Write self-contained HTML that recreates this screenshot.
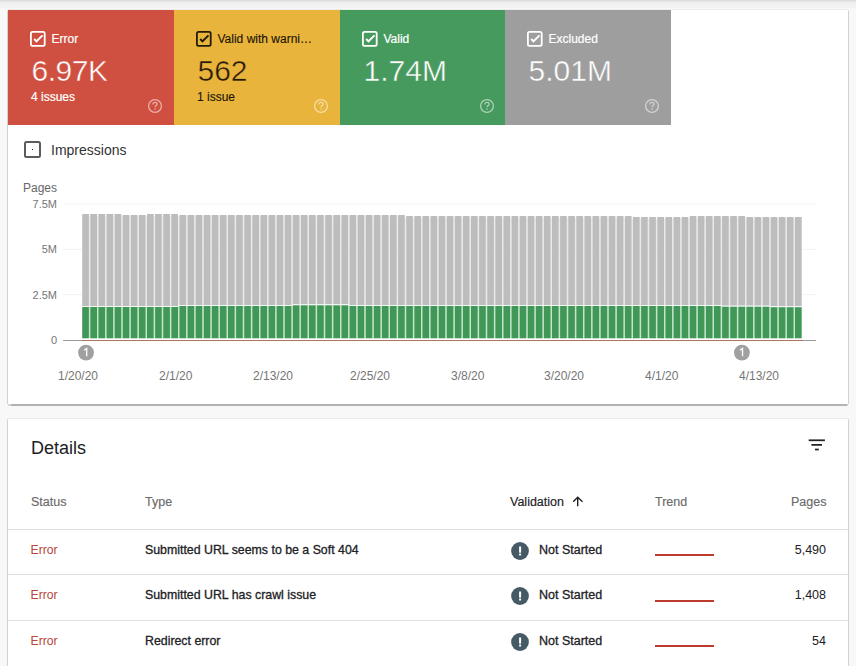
<!DOCTYPE html>
<html><head><meta charset="utf-8">
<style>
*{margin:0;padding:0;box-sizing:border-box}
html,body{width:856px;height:666px;overflow:hidden}
body{background:#f8f8f8;font-family:"Liberation Sans",sans-serif;position:relative}
.topstrip{position:absolute;left:0;top:0;width:856px;height:8px;background:linear-gradient(#d9d9d9 0px,#e6e6e6 1.5px,#f0f0f1 3px,#f2f2f3 8px)}
.card{position:absolute;left:8px;width:840px;background:#fff;box-shadow:1px 0 0 rgba(0,0,0,.13),-1px 0 0 rgba(0,0,0,.13),0 -1px 0 rgba(0,0,0,.05),0 1.5px 1px rgba(0,0,0,.28)}
#c1{top:10px;height:394px}
#c2{top:419px;height:300px}
.tile{position:absolute;top:10px;height:115px}
.t{position:absolute;white-space:nowrap;line-height:1}
.cb{position:absolute;width:16px;height:16px;border:2px solid;border-radius:2px}
.q{position:absolute;width:14px;height:14px}
.ylab{position:absolute;width:40px;text-align:right;font-size:11px;color:#757575;line-height:1}
.xlab{position:absolute;font-size:12px;color:#757575;line-height:1;white-space:nowrap}
.hdr{position:absolute;font-size:12.5px;color:#6a6a6a;line-height:1;white-space:nowrap;-webkit-text-stroke:0.15px currentColor}
.med{-webkit-text-stroke:0.3px currentColor}
.med2{-webkit-text-stroke:0.2px currentColor}
.cell{position:absolute;font-size:12.5px;line-height:1;white-space:nowrap}
.sep{position:absolute;left:8px;width:840px;height:1px;background:#e0e0e0}
</style></head><body>
<div class="topstrip"></div>
<div class="card" id="c1"></div>
<div class="card" id="c2"></div>

<!-- tiles -->
<div class="tile" style="left:8px;width:166px;background:#cf5040"></div>
<div class="tile" style="left:174px;width:166px;background:#e9b43c"></div>
<div class="tile" style="left:340px;width:165px;background:#479a5e"></div>
<div class="tile" style="left:505px;width:166px;background:#9e9e9e"></div>

<!-- tile contents -->
<svg width="18" height="18" style="position:absolute;left:30.1px;top:31.1px"><rect x="0.9" y="0.9" width="13.8" height="13.9" rx="1.6" fill="none" stroke="#fff" stroke-width="1.8"/><polyline points="4.2,8.0 6.5,10.3 12.5,4.4" fill="none" stroke="#fff" stroke-width="1.9"/></svg>
<div class="t med2" style="left:51.5px;top:33px;font-size:12px;color:#fff">Error</div>
<div class="t" style="left:31.5px;top:55.5px;font-size:30px;color:#fff;-webkit-text-stroke:0.45px #cf5040;letter-spacing:-0.45px">6.97K</div>
<div class="t med2" style="left:31px;top:91px;font-size:12px;color:#fff">4 issues</div>
<svg width="16" height="16" style="position:absolute;left:147px;top:98px"><circle cx="8" cy="8" r="6.4" fill="none" stroke="rgba(255,255,255,0.55)" stroke-width="1.3"/><path d="M5.9 6.4 C5.9 5.1 6.9 4.4 8 4.4 C9.2 4.4 10.1 5.2 10.1 6.2 C10.1 7.5 8.1 7.6 8.1 9.3" fill="none" stroke="rgba(255,255,255,0.55)" stroke-width="1.2"/><rect x="7.4" y="10.4" width="1.3" height="1.3" fill="rgba(255,255,255,0.55)"/></svg>
<svg width="18" height="18" style="position:absolute;left:196.1px;top:31.1px"><rect x="0.9" y="0.9" width="13.8" height="13.9" rx="1.6" fill="none" stroke="rgba(0,0,0,.85)" stroke-width="1.8"/><polyline points="4.2,8.0 6.5,10.3 12.5,4.4" fill="none" stroke="rgba(0,0,0,.85)" stroke-width="1.9"/></svg>
<div class="t med2" style="left:217.5px;top:33px;font-size:12px;color:rgba(0,0,0,.85)">Valid with warni…</div>
<div class="t" style="left:197.5px;top:55.5px;font-size:30px;color:rgba(0,0,0,.85);-webkit-text-stroke:0.45px #e9b43c">562</div>
<div class="t med2" style="left:197px;top:91px;font-size:12px;color:rgba(0,0,0,.85)">1 issue</div>
<svg width="16" height="16" style="position:absolute;left:313px;top:98px"><circle cx="8" cy="8" r="6.4" fill="none" stroke="rgba(255,255,255,0.55)" stroke-width="1.3"/><path d="M5.9 6.4 C5.9 5.1 6.9 4.4 8 4.4 C9.2 4.4 10.1 5.2 10.1 6.2 C10.1 7.5 8.1 7.6 8.1 9.3" fill="none" stroke="rgba(255,255,255,0.55)" stroke-width="1.2"/><rect x="7.4" y="10.4" width="1.3" height="1.3" fill="rgba(255,255,255,0.55)"/></svg>
<svg width="18" height="18" style="position:absolute;left:362.1px;top:31.1px"><rect x="0.9" y="0.9" width="13.8" height="13.9" rx="1.6" fill="none" stroke="#fff" stroke-width="1.8"/><polyline points="4.2,8.0 6.5,10.3 12.5,4.4" fill="none" stroke="#fff" stroke-width="1.9"/></svg>
<div class="t med2" style="left:383.5px;top:33px;font-size:12px;color:#fff">Valid</div>
<div class="t" style="left:363.5px;top:55.5px;font-size:30px;color:#fff;-webkit-text-stroke:0.45px #479a5e">1.74M</div>
<svg width="16" height="16" style="position:absolute;left:479px;top:98px"><circle cx="8" cy="8" r="6.4" fill="none" stroke="rgba(255,255,255,0.55)" stroke-width="1.3"/><path d="M5.9 6.4 C5.9 5.1 6.9 4.4 8 4.4 C9.2 4.4 10.1 5.2 10.1 6.2 C10.1 7.5 8.1 7.6 8.1 9.3" fill="none" stroke="rgba(255,255,255,0.55)" stroke-width="1.2"/><rect x="7.4" y="10.4" width="1.3" height="1.3" fill="rgba(255,255,255,0.55)"/></svg>
<svg width="18" height="18" style="position:absolute;left:527.1px;top:31.1px"><rect x="0.9" y="0.9" width="13.8" height="13.9" rx="1.6" fill="none" stroke="#fff" stroke-width="1.8"/><polyline points="4.2,8.0 6.5,10.3 12.5,4.4" fill="none" stroke="#fff" stroke-width="1.9"/></svg>
<div class="t med2" style="left:548.5px;top:33px;font-size:12px;color:#fff">Excluded</div>
<div class="t" style="left:528.5px;top:55.5px;font-size:30px;color:#fff;-webkit-text-stroke:0.45px #9e9e9e">5.01M</div>
<svg width="16" height="16" style="position:absolute;left:644px;top:98px"><circle cx="8" cy="8" r="6.4" fill="none" stroke="rgba(255,255,255,0.55)" stroke-width="1.3"/><path d="M5.9 6.4 C5.9 5.1 6.9 4.4 8 4.4 C9.2 4.4 10.1 5.2 10.1 6.2 C10.1 7.5 8.1 7.6 8.1 9.3" fill="none" stroke="rgba(255,255,255,0.55)" stroke-width="1.2"/><rect x="7.4" y="10.4" width="1.3" height="1.3" fill="rgba(255,255,255,0.55)"/></svg>

<!-- impressions -->
<div style="position:absolute;left:23.7px;top:140.9px;width:17.6px;height:17.6px;border:2px solid #5c5c5c;border-radius:2.5px"></div>
<div style="position:absolute;left:31.9px;top:149px;width:1.2px;height:1.2px;background:#222"></div>
<div class="t" style="left:51px;top:143px;font-size:14px;color:#333">Impressions</div>
<div class="t" style="left:23px;top:182px;font-size:12px;color:#666">Pages</div>

<svg width="856" height="666" style="position:absolute;left:0;top:0">
<g stroke="#f2f2f2" stroke-width="1">
<line x1="63" y1="204" x2="816" y2="204"/>
<line x1="63" y1="249.3" x2="816" y2="249.3"/>
<line x1="63" y1="294.6" x2="816" y2="294.6"/>
</g>
<line x1="63" y1="340.5" x2="816" y2="340.5" stroke="#9a9a9a" stroke-width="1"/>
<rect x="88.90" y="215.5" width="1.40" height="90.50" fill="#e9e9e9"/>
<rect x="88.90" y="307" width="1.40" height="31.30" fill="#c2e8c8"/>
<rect x="97.00" y="215.5" width="1.40" height="90.50" fill="#e9e9e9"/>
<rect x="97.00" y="307" width="1.40" height="31.30" fill="#c2e8c8"/>
<rect x="105.10" y="215.5" width="1.40" height="90.50" fill="#e9e9e9"/>
<rect x="105.10" y="307" width="1.40" height="31.30" fill="#c2e8c8"/>
<rect x="113.20" y="215.5" width="1.40" height="90.50" fill="#e9e9e9"/>
<rect x="113.20" y="307" width="1.40" height="31.30" fill="#c2e8c8"/>
<rect x="121.30" y="216.5" width="1.40" height="89.50" fill="#e9e9e9"/>
<rect x="121.30" y="307" width="1.40" height="31.30" fill="#c2e8c8"/>
<rect x="129.40" y="216.5" width="1.40" height="89.50" fill="#e9e9e9"/>
<rect x="129.40" y="307" width="1.40" height="31.30" fill="#c2e8c8"/>
<rect x="137.50" y="216.5" width="1.40" height="89.50" fill="#e9e9e9"/>
<rect x="137.50" y="307" width="1.40" height="31.30" fill="#c2e8c8"/>
<rect x="145.60" y="216.5" width="1.40" height="89.50" fill="#e9e9e9"/>
<rect x="145.60" y="307" width="1.40" height="31.30" fill="#c2e8c8"/>
<rect x="153.70" y="215.5" width="1.40" height="90.50" fill="#e9e9e9"/>
<rect x="153.70" y="307" width="1.40" height="31.30" fill="#c2e8c8"/>
<rect x="161.80" y="215.5" width="1.40" height="90.50" fill="#e9e9e9"/>
<rect x="161.80" y="307" width="1.40" height="31.30" fill="#c2e8c8"/>
<rect x="169.90" y="215.5" width="1.40" height="90.50" fill="#e9e9e9"/>
<rect x="169.90" y="307" width="1.40" height="31.30" fill="#c2e8c8"/>
<rect x="178.00" y="216.5" width="1.40" height="88.50" fill="#e9e9e9"/>
<rect x="178.00" y="306" width="1.40" height="32.30" fill="#c2e8c8"/>
<rect x="186.10" y="216.5" width="1.40" height="88.50" fill="#e9e9e9"/>
<rect x="186.10" y="306" width="1.40" height="32.30" fill="#c2e8c8"/>
<rect x="194.20" y="216.5" width="1.40" height="88.50" fill="#e9e9e9"/>
<rect x="194.20" y="306" width="1.40" height="32.30" fill="#c2e8c8"/>
<rect x="202.30" y="216.5" width="1.40" height="88.50" fill="#e9e9e9"/>
<rect x="202.30" y="306" width="1.40" height="32.30" fill="#c2e8c8"/>
<rect x="210.40" y="216.5" width="1.40" height="88.50" fill="#e9e9e9"/>
<rect x="210.40" y="306" width="1.40" height="32.30" fill="#c2e8c8"/>
<rect x="218.50" y="216.5" width="1.40" height="88.50" fill="#e9e9e9"/>
<rect x="218.50" y="306" width="1.40" height="32.30" fill="#c2e8c8"/>
<rect x="226.60" y="216.5" width="1.40" height="88.50" fill="#e9e9e9"/>
<rect x="226.60" y="306" width="1.40" height="32.30" fill="#c2e8c8"/>
<rect x="234.70" y="216.5" width="1.40" height="88.50" fill="#e9e9e9"/>
<rect x="234.70" y="306" width="1.40" height="32.30" fill="#c2e8c8"/>
<rect x="242.80" y="216.5" width="1.40" height="88.50" fill="#e9e9e9"/>
<rect x="242.80" y="306" width="1.40" height="32.30" fill="#c2e8c8"/>
<rect x="250.90" y="216.5" width="1.40" height="88.50" fill="#e9e9e9"/>
<rect x="250.90" y="306" width="1.40" height="32.30" fill="#c2e8c8"/>
<rect x="259.00" y="216.5" width="1.40" height="88.50" fill="#e9e9e9"/>
<rect x="259.00" y="306" width="1.40" height="32.30" fill="#c2e8c8"/>
<rect x="267.10" y="216.5" width="1.40" height="88.50" fill="#e9e9e9"/>
<rect x="267.10" y="306" width="1.40" height="32.30" fill="#c2e8c8"/>
<rect x="275.20" y="216.5" width="1.40" height="88.50" fill="#e9e9e9"/>
<rect x="275.20" y="306" width="1.40" height="32.30" fill="#c2e8c8"/>
<rect x="283.30" y="216.5" width="1.40" height="88.50" fill="#e9e9e9"/>
<rect x="283.30" y="306" width="1.40" height="32.30" fill="#c2e8c8"/>
<rect x="291.40" y="216.5" width="1.40" height="87.80" fill="#e9e9e9"/>
<rect x="291.40" y="305.3" width="1.40" height="33.00" fill="#c2e8c8"/>
<rect x="299.50" y="216.5" width="1.40" height="87.80" fill="#e9e9e9"/>
<rect x="299.50" y="305.3" width="1.40" height="33.00" fill="#c2e8c8"/>
<rect x="307.60" y="216.5" width="1.40" height="87.80" fill="#e9e9e9"/>
<rect x="307.60" y="305.3" width="1.40" height="33.00" fill="#c2e8c8"/>
<rect x="315.70" y="216.5" width="1.40" height="87.80" fill="#e9e9e9"/>
<rect x="315.70" y="305.3" width="1.40" height="33.00" fill="#c2e8c8"/>
<rect x="323.80" y="216.5" width="1.40" height="87.80" fill="#e9e9e9"/>
<rect x="323.80" y="305.3" width="1.40" height="33.00" fill="#c2e8c8"/>
<rect x="331.90" y="216.5" width="1.40" height="87.80" fill="#e9e9e9"/>
<rect x="331.90" y="305.3" width="1.40" height="33.00" fill="#c2e8c8"/>
<rect x="340.00" y="216.5" width="1.40" height="87.80" fill="#e9e9e9"/>
<rect x="340.00" y="305.3" width="1.40" height="33.00" fill="#c2e8c8"/>
<rect x="348.10" y="216.5" width="1.40" height="87.80" fill="#e9e9e9"/>
<rect x="348.10" y="305.3" width="1.40" height="33.00" fill="#c2e8c8"/>
<rect x="356.20" y="216.5" width="1.40" height="88.50" fill="#e9e9e9"/>
<rect x="356.20" y="306" width="1.40" height="32.30" fill="#c2e8c8"/>
<rect x="364.30" y="216.5" width="1.40" height="88.50" fill="#e9e9e9"/>
<rect x="364.30" y="306" width="1.40" height="32.30" fill="#c2e8c8"/>
<rect x="372.40" y="216.5" width="1.40" height="88.50" fill="#e9e9e9"/>
<rect x="372.40" y="306" width="1.40" height="32.30" fill="#c2e8c8"/>
<rect x="380.50" y="216.5" width="1.40" height="88.50" fill="#e9e9e9"/>
<rect x="380.50" y="306" width="1.40" height="32.30" fill="#c2e8c8"/>
<rect x="388.60" y="216.5" width="1.40" height="88.50" fill="#e9e9e9"/>
<rect x="388.60" y="306" width="1.40" height="32.30" fill="#c2e8c8"/>
<rect x="396.70" y="216.5" width="1.40" height="88.50" fill="#e9e9e9"/>
<rect x="396.70" y="306" width="1.40" height="32.30" fill="#c2e8c8"/>
<rect x="404.80" y="217.5" width="1.40" height="87.50" fill="#e9e9e9"/>
<rect x="404.80" y="306" width="1.40" height="32.30" fill="#c2e8c8"/>
<rect x="412.90" y="217.5" width="1.40" height="87.50" fill="#e9e9e9"/>
<rect x="412.90" y="306" width="1.40" height="32.30" fill="#c2e8c8"/>
<rect x="421.00" y="217.5" width="1.40" height="87.50" fill="#e9e9e9"/>
<rect x="421.00" y="306" width="1.40" height="32.30" fill="#c2e8c8"/>
<rect x="429.10" y="217.5" width="1.40" height="87.50" fill="#e9e9e9"/>
<rect x="429.10" y="306" width="1.40" height="32.30" fill="#c2e8c8"/>
<rect x="437.20" y="217.5" width="1.40" height="87.50" fill="#e9e9e9"/>
<rect x="437.20" y="306" width="1.40" height="32.30" fill="#c2e8c8"/>
<rect x="445.30" y="217.5" width="1.40" height="87.50" fill="#e9e9e9"/>
<rect x="445.30" y="306" width="1.40" height="32.30" fill="#c2e8c8"/>
<rect x="453.40" y="217.5" width="1.40" height="87.50" fill="#e9e9e9"/>
<rect x="453.40" y="306" width="1.40" height="32.30" fill="#c2e8c8"/>
<rect x="461.50" y="217.5" width="1.40" height="87.50" fill="#e9e9e9"/>
<rect x="461.50" y="306" width="1.40" height="32.30" fill="#c2e8c8"/>
<rect x="469.60" y="217.5" width="1.40" height="87.50" fill="#e9e9e9"/>
<rect x="469.60" y="306" width="1.40" height="32.30" fill="#c2e8c8"/>
<rect x="477.70" y="217.5" width="1.40" height="87.50" fill="#e9e9e9"/>
<rect x="477.70" y="306" width="1.40" height="32.30" fill="#c2e8c8"/>
<rect x="485.80" y="217.5" width="1.40" height="87.50" fill="#e9e9e9"/>
<rect x="485.80" y="306" width="1.40" height="32.30" fill="#c2e8c8"/>
<rect x="493.90" y="217.5" width="1.40" height="87.50" fill="#e9e9e9"/>
<rect x="493.90" y="306" width="1.40" height="32.30" fill="#c2e8c8"/>
<rect x="502.00" y="217.5" width="1.40" height="87.50" fill="#e9e9e9"/>
<rect x="502.00" y="306" width="1.40" height="32.30" fill="#c2e8c8"/>
<rect x="510.10" y="217.5" width="1.40" height="87.50" fill="#e9e9e9"/>
<rect x="510.10" y="306" width="1.40" height="32.30" fill="#c2e8c8"/>
<rect x="518.20" y="217.5" width="1.40" height="87.50" fill="#e9e9e9"/>
<rect x="518.20" y="306" width="1.40" height="32.30" fill="#c2e8c8"/>
<rect x="526.30" y="217.5" width="1.40" height="87.50" fill="#e9e9e9"/>
<rect x="526.30" y="306" width="1.40" height="32.30" fill="#c2e8c8"/>
<rect x="534.40" y="217.5" width="1.40" height="87.50" fill="#e9e9e9"/>
<rect x="534.40" y="306" width="1.40" height="32.30" fill="#c2e8c8"/>
<rect x="542.50" y="217.5" width="1.40" height="87.50" fill="#e9e9e9"/>
<rect x="542.50" y="306" width="1.40" height="32.30" fill="#c2e8c8"/>
<rect x="550.60" y="217.5" width="1.40" height="87.50" fill="#e9e9e9"/>
<rect x="550.60" y="306" width="1.40" height="32.30" fill="#c2e8c8"/>
<rect x="558.70" y="217.5" width="1.40" height="87.50" fill="#e9e9e9"/>
<rect x="558.70" y="306" width="1.40" height="32.30" fill="#c2e8c8"/>
<rect x="566.80" y="217.5" width="1.40" height="87.50" fill="#e9e9e9"/>
<rect x="566.80" y="306" width="1.40" height="32.30" fill="#c2e8c8"/>
<rect x="574.90" y="217.5" width="1.40" height="87.50" fill="#e9e9e9"/>
<rect x="574.90" y="306" width="1.40" height="32.30" fill="#c2e8c8"/>
<rect x="583.00" y="217.5" width="1.40" height="87.50" fill="#e9e9e9"/>
<rect x="583.00" y="306" width="1.40" height="32.30" fill="#c2e8c8"/>
<rect x="591.10" y="217.5" width="1.40" height="87.50" fill="#e9e9e9"/>
<rect x="591.10" y="306" width="1.40" height="32.30" fill="#c2e8c8"/>
<rect x="599.20" y="217.5" width="1.40" height="87.50" fill="#e9e9e9"/>
<rect x="599.20" y="306" width="1.40" height="32.30" fill="#c2e8c8"/>
<rect x="607.30" y="217.5" width="1.40" height="87.50" fill="#e9e9e9"/>
<rect x="607.30" y="306" width="1.40" height="32.30" fill="#c2e8c8"/>
<rect x="615.40" y="217.5" width="1.40" height="87.50" fill="#e9e9e9"/>
<rect x="615.40" y="306" width="1.40" height="32.30" fill="#c2e8c8"/>
<rect x="623.50" y="217.5" width="1.40" height="87.50" fill="#e9e9e9"/>
<rect x="623.50" y="306" width="1.40" height="32.30" fill="#c2e8c8"/>
<rect x="631.60" y="218.5" width="1.40" height="86.50" fill="#e9e9e9"/>
<rect x="631.60" y="306" width="1.40" height="32.30" fill="#c2e8c8"/>
<rect x="639.70" y="218.5" width="1.40" height="86.50" fill="#e9e9e9"/>
<rect x="639.70" y="306" width="1.40" height="32.30" fill="#c2e8c8"/>
<rect x="647.80" y="218.5" width="1.40" height="86.50" fill="#e9e9e9"/>
<rect x="647.80" y="306" width="1.40" height="32.30" fill="#c2e8c8"/>
<rect x="655.90" y="218.5" width="1.40" height="86.50" fill="#e9e9e9"/>
<rect x="655.90" y="306" width="1.40" height="32.30" fill="#c2e8c8"/>
<rect x="664.00" y="218.5" width="1.40" height="86.50" fill="#e9e9e9"/>
<rect x="664.00" y="306" width="1.40" height="32.30" fill="#c2e8c8"/>
<rect x="672.10" y="218.5" width="1.40" height="86.50" fill="#e9e9e9"/>
<rect x="672.10" y="306" width="1.40" height="32.30" fill="#c2e8c8"/>
<rect x="680.20" y="218.5" width="1.40" height="86.50" fill="#e9e9e9"/>
<rect x="680.20" y="306" width="1.40" height="32.30" fill="#c2e8c8"/>
<rect x="688.30" y="218.5" width="1.40" height="86.50" fill="#e9e9e9"/>
<rect x="688.30" y="306" width="1.40" height="32.30" fill="#c2e8c8"/>
<rect x="696.40" y="217.5" width="1.40" height="87.50" fill="#e9e9e9"/>
<rect x="696.40" y="306" width="1.40" height="32.30" fill="#c2e8c8"/>
<rect x="704.50" y="217.5" width="1.40" height="87.50" fill="#e9e9e9"/>
<rect x="704.50" y="306" width="1.40" height="32.30" fill="#c2e8c8"/>
<rect x="712.60" y="217.5" width="1.40" height="87.50" fill="#e9e9e9"/>
<rect x="712.60" y="306" width="1.40" height="32.30" fill="#c2e8c8"/>
<rect x="720.70" y="217.5" width="1.40" height="87.50" fill="#e9e9e9"/>
<rect x="720.70" y="306" width="1.40" height="32.30" fill="#c2e8c8"/>
<rect x="728.80" y="217.5" width="1.40" height="88.20" fill="#e9e9e9"/>
<rect x="728.80" y="306.7" width="1.40" height="31.60" fill="#c2e8c8"/>
<rect x="736.90" y="217.5" width="1.40" height="88.20" fill="#e9e9e9"/>
<rect x="736.90" y="306.7" width="1.40" height="31.60" fill="#c2e8c8"/>
<rect x="745.00" y="218.5" width="1.40" height="87.20" fill="#e9e9e9"/>
<rect x="745.00" y="306.7" width="1.40" height="31.60" fill="#c2e8c8"/>
<rect x="753.10" y="218.5" width="1.40" height="87.20" fill="#e9e9e9"/>
<rect x="753.10" y="306.7" width="1.40" height="31.60" fill="#c2e8c8"/>
<rect x="761.20" y="218.5" width="1.40" height="87.20" fill="#e9e9e9"/>
<rect x="761.20" y="306.7" width="1.40" height="31.60" fill="#c2e8c8"/>
<rect x="769.30" y="218.5" width="1.40" height="87.20" fill="#e9e9e9"/>
<rect x="769.30" y="306.7" width="1.40" height="31.60" fill="#c2e8c8"/>
<rect x="777.40" y="218.5" width="1.40" height="87.70" fill="#e9e9e9"/>
<rect x="777.40" y="307.2" width="1.40" height="31.10" fill="#c2e8c8"/>
<rect x="785.50" y="218.5" width="1.40" height="87.70" fill="#e9e9e9"/>
<rect x="785.50" y="307.2" width="1.40" height="31.10" fill="#c2e8c8"/>
<rect x="793.60" y="218.5" width="1.40" height="87.70" fill="#e9e9e9"/>
<rect x="793.60" y="307.2" width="1.40" height="31.10" fill="#c2e8c8"/>
<rect x="82.20" y="214" width="6.7" height="92.00" fill="#bdbdbd"/>
<rect x="82.20" y="306" width="6.7" height="1" fill="#f2f8f2"/>
<rect x="82.20" y="307" width="6.7" height="31.30" fill="#409758"/>
<rect x="90.30" y="214" width="6.7" height="92.00" fill="#bdbdbd"/>
<rect x="90.30" y="306" width="6.7" height="1" fill="#f2f8f2"/>
<rect x="90.30" y="307" width="6.7" height="31.30" fill="#409758"/>
<rect x="98.40" y="214" width="6.7" height="92.00" fill="#bdbdbd"/>
<rect x="98.40" y="306" width="6.7" height="1" fill="#f2f8f2"/>
<rect x="98.40" y="307" width="6.7" height="31.30" fill="#409758"/>
<rect x="106.50" y="214" width="6.7" height="92.00" fill="#bdbdbd"/>
<rect x="106.50" y="306" width="6.7" height="1" fill="#f2f8f2"/>
<rect x="106.50" y="307" width="6.7" height="31.30" fill="#409758"/>
<rect x="114.60" y="214" width="6.7" height="92.00" fill="#bdbdbd"/>
<rect x="114.60" y="306" width="6.7" height="1" fill="#f2f8f2"/>
<rect x="114.60" y="307" width="6.7" height="31.30" fill="#409758"/>
<rect x="122.70" y="215" width="6.7" height="91.00" fill="#bdbdbd"/>
<rect x="122.70" y="306" width="6.7" height="1" fill="#f2f8f2"/>
<rect x="122.70" y="307" width="6.7" height="31.30" fill="#409758"/>
<rect x="130.80" y="215" width="6.7" height="91.00" fill="#bdbdbd"/>
<rect x="130.80" y="306" width="6.7" height="1" fill="#f2f8f2"/>
<rect x="130.80" y="307" width="6.7" height="31.30" fill="#409758"/>
<rect x="138.90" y="215" width="6.7" height="91.00" fill="#bdbdbd"/>
<rect x="138.90" y="306" width="6.7" height="1" fill="#f2f8f2"/>
<rect x="138.90" y="307" width="6.7" height="31.30" fill="#409758"/>
<rect x="147.00" y="214" width="6.7" height="92.00" fill="#bdbdbd"/>
<rect x="147.00" y="306" width="6.7" height="1" fill="#f2f8f2"/>
<rect x="147.00" y="307" width="6.7" height="31.30" fill="#409758"/>
<rect x="155.10" y="214" width="6.7" height="92.00" fill="#bdbdbd"/>
<rect x="155.10" y="306" width="6.7" height="1" fill="#f2f8f2"/>
<rect x="155.10" y="307" width="6.7" height="31.30" fill="#409758"/>
<rect x="163.20" y="214" width="6.7" height="92.00" fill="#bdbdbd"/>
<rect x="163.20" y="306" width="6.7" height="1" fill="#f2f8f2"/>
<rect x="163.20" y="307" width="6.7" height="31.30" fill="#409758"/>
<rect x="171.30" y="214" width="6.7" height="92.00" fill="#bdbdbd"/>
<rect x="171.30" y="306" width="6.7" height="1" fill="#f2f8f2"/>
<rect x="171.30" y="307" width="6.7" height="31.30" fill="#409758"/>
<rect x="179.40" y="215" width="6.7" height="90.00" fill="#bdbdbd"/>
<rect x="179.40" y="305" width="6.7" height="1" fill="#f2f8f2"/>
<rect x="179.40" y="306" width="6.7" height="32.30" fill="#409758"/>
<rect x="187.50" y="215" width="6.7" height="90.00" fill="#bdbdbd"/>
<rect x="187.50" y="305" width="6.7" height="1" fill="#f2f8f2"/>
<rect x="187.50" y="306" width="6.7" height="32.30" fill="#409758"/>
<rect x="195.60" y="215" width="6.7" height="90.00" fill="#bdbdbd"/>
<rect x="195.60" y="305" width="6.7" height="1" fill="#f2f8f2"/>
<rect x="195.60" y="306" width="6.7" height="32.30" fill="#409758"/>
<rect x="203.70" y="215" width="6.7" height="90.00" fill="#bdbdbd"/>
<rect x="203.70" y="305" width="6.7" height="1" fill="#f2f8f2"/>
<rect x="203.70" y="306" width="6.7" height="32.30" fill="#409758"/>
<rect x="211.80" y="215" width="6.7" height="90.00" fill="#bdbdbd"/>
<rect x="211.80" y="305" width="6.7" height="1" fill="#f2f8f2"/>
<rect x="211.80" y="306" width="6.7" height="32.30" fill="#409758"/>
<rect x="219.90" y="215" width="6.7" height="90.00" fill="#bdbdbd"/>
<rect x="219.90" y="305" width="6.7" height="1" fill="#f2f8f2"/>
<rect x="219.90" y="306" width="6.7" height="32.30" fill="#409758"/>
<rect x="228.00" y="215" width="6.7" height="90.00" fill="#bdbdbd"/>
<rect x="228.00" y="305" width="6.7" height="1" fill="#f2f8f2"/>
<rect x="228.00" y="306" width="6.7" height="32.30" fill="#409758"/>
<rect x="236.10" y="215" width="6.7" height="90.00" fill="#bdbdbd"/>
<rect x="236.10" y="305" width="6.7" height="1" fill="#f2f8f2"/>
<rect x="236.10" y="306" width="6.7" height="32.30" fill="#409758"/>
<rect x="244.20" y="215" width="6.7" height="90.00" fill="#bdbdbd"/>
<rect x="244.20" y="305" width="6.7" height="1" fill="#f2f8f2"/>
<rect x="244.20" y="306" width="6.7" height="32.30" fill="#409758"/>
<rect x="252.30" y="215" width="6.7" height="90.00" fill="#bdbdbd"/>
<rect x="252.30" y="305" width="6.7" height="1" fill="#f2f8f2"/>
<rect x="252.30" y="306" width="6.7" height="32.30" fill="#409758"/>
<rect x="260.40" y="215" width="6.7" height="90.00" fill="#bdbdbd"/>
<rect x="260.40" y="305" width="6.7" height="1" fill="#f2f8f2"/>
<rect x="260.40" y="306" width="6.7" height="32.30" fill="#409758"/>
<rect x="268.50" y="215" width="6.7" height="90.00" fill="#bdbdbd"/>
<rect x="268.50" y="305" width="6.7" height="1" fill="#f2f8f2"/>
<rect x="268.50" y="306" width="6.7" height="32.30" fill="#409758"/>
<rect x="276.60" y="215" width="6.7" height="90.00" fill="#bdbdbd"/>
<rect x="276.60" y="305" width="6.7" height="1" fill="#f2f8f2"/>
<rect x="276.60" y="306" width="6.7" height="32.30" fill="#409758"/>
<rect x="284.70" y="215" width="6.7" height="90.00" fill="#bdbdbd"/>
<rect x="284.70" y="305" width="6.7" height="1" fill="#f2f8f2"/>
<rect x="284.70" y="306" width="6.7" height="32.30" fill="#409758"/>
<rect x="292.80" y="215" width="6.7" height="89.30" fill="#bdbdbd"/>
<rect x="292.80" y="304.3" width="6.7" height="1" fill="#f2f8f2"/>
<rect x="292.80" y="305.3" width="6.7" height="33.00" fill="#409758"/>
<rect x="300.90" y="215" width="6.7" height="89.30" fill="#bdbdbd"/>
<rect x="300.90" y="304.3" width="6.7" height="1" fill="#f2f8f2"/>
<rect x="300.90" y="305.3" width="6.7" height="33.00" fill="#409758"/>
<rect x="309.00" y="215" width="6.7" height="89.30" fill="#bdbdbd"/>
<rect x="309.00" y="304.3" width="6.7" height="1" fill="#f2f8f2"/>
<rect x="309.00" y="305.3" width="6.7" height="33.00" fill="#409758"/>
<rect x="317.10" y="215" width="6.7" height="89.30" fill="#bdbdbd"/>
<rect x="317.10" y="304.3" width="6.7" height="1" fill="#f2f8f2"/>
<rect x="317.10" y="305.3" width="6.7" height="33.00" fill="#409758"/>
<rect x="325.20" y="215" width="6.7" height="89.30" fill="#bdbdbd"/>
<rect x="325.20" y="304.3" width="6.7" height="1" fill="#f2f8f2"/>
<rect x="325.20" y="305.3" width="6.7" height="33.00" fill="#409758"/>
<rect x="333.30" y="215" width="6.7" height="89.30" fill="#bdbdbd"/>
<rect x="333.30" y="304.3" width="6.7" height="1" fill="#f2f8f2"/>
<rect x="333.30" y="305.3" width="6.7" height="33.00" fill="#409758"/>
<rect x="341.40" y="215" width="6.7" height="89.30" fill="#bdbdbd"/>
<rect x="341.40" y="304.3" width="6.7" height="1" fill="#f2f8f2"/>
<rect x="341.40" y="305.3" width="6.7" height="33.00" fill="#409758"/>
<rect x="349.50" y="215" width="6.7" height="90.00" fill="#bdbdbd"/>
<rect x="349.50" y="305" width="6.7" height="1" fill="#f2f8f2"/>
<rect x="349.50" y="306" width="6.7" height="32.30" fill="#409758"/>
<rect x="357.60" y="215" width="6.7" height="90.00" fill="#bdbdbd"/>
<rect x="357.60" y="305" width="6.7" height="1" fill="#f2f8f2"/>
<rect x="357.60" y="306" width="6.7" height="32.30" fill="#409758"/>
<rect x="365.70" y="215" width="6.7" height="90.00" fill="#bdbdbd"/>
<rect x="365.70" y="305" width="6.7" height="1" fill="#f2f8f2"/>
<rect x="365.70" y="306" width="6.7" height="32.30" fill="#409758"/>
<rect x="373.80" y="215" width="6.7" height="90.00" fill="#bdbdbd"/>
<rect x="373.80" y="305" width="6.7" height="1" fill="#f2f8f2"/>
<rect x="373.80" y="306" width="6.7" height="32.30" fill="#409758"/>
<rect x="381.90" y="215" width="6.7" height="90.00" fill="#bdbdbd"/>
<rect x="381.90" y="305" width="6.7" height="1" fill="#f2f8f2"/>
<rect x="381.90" y="306" width="6.7" height="32.30" fill="#409758"/>
<rect x="390.00" y="215" width="6.7" height="90.00" fill="#bdbdbd"/>
<rect x="390.00" y="305" width="6.7" height="1" fill="#f2f8f2"/>
<rect x="390.00" y="306" width="6.7" height="32.30" fill="#409758"/>
<rect x="398.10" y="215" width="6.7" height="90.00" fill="#bdbdbd"/>
<rect x="398.10" y="305" width="6.7" height="1" fill="#f2f8f2"/>
<rect x="398.10" y="306" width="6.7" height="32.30" fill="#409758"/>
<rect x="406.20" y="216" width="6.7" height="89.00" fill="#bdbdbd"/>
<rect x="406.20" y="305" width="6.7" height="1" fill="#f2f8f2"/>
<rect x="406.20" y="306" width="6.7" height="32.30" fill="#409758"/>
<rect x="414.30" y="216" width="6.7" height="89.00" fill="#bdbdbd"/>
<rect x="414.30" y="305" width="6.7" height="1" fill="#f2f8f2"/>
<rect x="414.30" y="306" width="6.7" height="32.30" fill="#409758"/>
<rect x="422.40" y="216" width="6.7" height="89.00" fill="#bdbdbd"/>
<rect x="422.40" y="305" width="6.7" height="1" fill="#f2f8f2"/>
<rect x="422.40" y="306" width="6.7" height="32.30" fill="#409758"/>
<rect x="430.50" y="216" width="6.7" height="89.00" fill="#bdbdbd"/>
<rect x="430.50" y="305" width="6.7" height="1" fill="#f2f8f2"/>
<rect x="430.50" y="306" width="6.7" height="32.30" fill="#409758"/>
<rect x="438.60" y="216" width="6.7" height="89.00" fill="#bdbdbd"/>
<rect x="438.60" y="305" width="6.7" height="1" fill="#f2f8f2"/>
<rect x="438.60" y="306" width="6.7" height="32.30" fill="#409758"/>
<rect x="446.70" y="216" width="6.7" height="89.00" fill="#bdbdbd"/>
<rect x="446.70" y="305" width="6.7" height="1" fill="#f2f8f2"/>
<rect x="446.70" y="306" width="6.7" height="32.30" fill="#409758"/>
<rect x="454.80" y="216" width="6.7" height="89.00" fill="#bdbdbd"/>
<rect x="454.80" y="305" width="6.7" height="1" fill="#f2f8f2"/>
<rect x="454.80" y="306" width="6.7" height="32.30" fill="#409758"/>
<rect x="462.90" y="216" width="6.7" height="89.00" fill="#bdbdbd"/>
<rect x="462.90" y="305" width="6.7" height="1" fill="#f2f8f2"/>
<rect x="462.90" y="306" width="6.7" height="32.30" fill="#409758"/>
<rect x="471.00" y="216" width="6.7" height="89.00" fill="#bdbdbd"/>
<rect x="471.00" y="305" width="6.7" height="1" fill="#f2f8f2"/>
<rect x="471.00" y="306" width="6.7" height="32.30" fill="#409758"/>
<rect x="479.10" y="216" width="6.7" height="89.00" fill="#bdbdbd"/>
<rect x="479.10" y="305" width="6.7" height="1" fill="#f2f8f2"/>
<rect x="479.10" y="306" width="6.7" height="32.30" fill="#409758"/>
<rect x="487.20" y="216" width="6.7" height="89.00" fill="#bdbdbd"/>
<rect x="487.20" y="305" width="6.7" height="1" fill="#f2f8f2"/>
<rect x="487.20" y="306" width="6.7" height="32.30" fill="#409758"/>
<rect x="495.30" y="216" width="6.7" height="89.00" fill="#bdbdbd"/>
<rect x="495.30" y="305" width="6.7" height="1" fill="#f2f8f2"/>
<rect x="495.30" y="306" width="6.7" height="32.30" fill="#409758"/>
<rect x="503.40" y="216" width="6.7" height="89.00" fill="#bdbdbd"/>
<rect x="503.40" y="305" width="6.7" height="1" fill="#f2f8f2"/>
<rect x="503.40" y="306" width="6.7" height="32.30" fill="#409758"/>
<rect x="511.50" y="216" width="6.7" height="89.00" fill="#bdbdbd"/>
<rect x="511.50" y="305" width="6.7" height="1" fill="#f2f8f2"/>
<rect x="511.50" y="306" width="6.7" height="32.30" fill="#409758"/>
<rect x="519.60" y="216" width="6.7" height="89.00" fill="#bdbdbd"/>
<rect x="519.60" y="305" width="6.7" height="1" fill="#f2f8f2"/>
<rect x="519.60" y="306" width="6.7" height="32.30" fill="#409758"/>
<rect x="527.70" y="216" width="6.7" height="89.00" fill="#bdbdbd"/>
<rect x="527.70" y="305" width="6.7" height="1" fill="#f2f8f2"/>
<rect x="527.70" y="306" width="6.7" height="32.30" fill="#409758"/>
<rect x="535.80" y="216" width="6.7" height="89.00" fill="#bdbdbd"/>
<rect x="535.80" y="305" width="6.7" height="1" fill="#f2f8f2"/>
<rect x="535.80" y="306" width="6.7" height="32.30" fill="#409758"/>
<rect x="543.90" y="216" width="6.7" height="89.00" fill="#bdbdbd"/>
<rect x="543.90" y="305" width="6.7" height="1" fill="#f2f8f2"/>
<rect x="543.90" y="306" width="6.7" height="32.30" fill="#409758"/>
<rect x="552.00" y="216" width="6.7" height="89.00" fill="#bdbdbd"/>
<rect x="552.00" y="305" width="6.7" height="1" fill="#f2f8f2"/>
<rect x="552.00" y="306" width="6.7" height="32.30" fill="#409758"/>
<rect x="560.10" y="216" width="6.7" height="89.00" fill="#bdbdbd"/>
<rect x="560.10" y="305" width="6.7" height="1" fill="#f2f8f2"/>
<rect x="560.10" y="306" width="6.7" height="32.30" fill="#409758"/>
<rect x="568.20" y="216" width="6.7" height="89.00" fill="#bdbdbd"/>
<rect x="568.20" y="305" width="6.7" height="1" fill="#f2f8f2"/>
<rect x="568.20" y="306" width="6.7" height="32.30" fill="#409758"/>
<rect x="576.30" y="216" width="6.7" height="89.00" fill="#bdbdbd"/>
<rect x="576.30" y="305" width="6.7" height="1" fill="#f2f8f2"/>
<rect x="576.30" y="306" width="6.7" height="32.30" fill="#409758"/>
<rect x="584.40" y="216" width="6.7" height="89.00" fill="#bdbdbd"/>
<rect x="584.40" y="305" width="6.7" height="1" fill="#f2f8f2"/>
<rect x="584.40" y="306" width="6.7" height="32.30" fill="#409758"/>
<rect x="592.50" y="216" width="6.7" height="89.00" fill="#bdbdbd"/>
<rect x="592.50" y="305" width="6.7" height="1" fill="#f2f8f2"/>
<rect x="592.50" y="306" width="6.7" height="32.30" fill="#409758"/>
<rect x="600.60" y="216" width="6.7" height="89.00" fill="#bdbdbd"/>
<rect x="600.60" y="305" width="6.7" height="1" fill="#f2f8f2"/>
<rect x="600.60" y="306" width="6.7" height="32.30" fill="#409758"/>
<rect x="608.70" y="216" width="6.7" height="89.00" fill="#bdbdbd"/>
<rect x="608.70" y="305" width="6.7" height="1" fill="#f2f8f2"/>
<rect x="608.70" y="306" width="6.7" height="32.30" fill="#409758"/>
<rect x="616.80" y="216" width="6.7" height="89.00" fill="#bdbdbd"/>
<rect x="616.80" y="305" width="6.7" height="1" fill="#f2f8f2"/>
<rect x="616.80" y="306" width="6.7" height="32.30" fill="#409758"/>
<rect x="624.90" y="216" width="6.7" height="89.00" fill="#bdbdbd"/>
<rect x="624.90" y="305" width="6.7" height="1" fill="#f2f8f2"/>
<rect x="624.90" y="306" width="6.7" height="32.30" fill="#409758"/>
<rect x="633.00" y="217" width="6.7" height="88.00" fill="#bdbdbd"/>
<rect x="633.00" y="305" width="6.7" height="1" fill="#f2f8f2"/>
<rect x="633.00" y="306" width="6.7" height="32.30" fill="#409758"/>
<rect x="641.10" y="217" width="6.7" height="88.00" fill="#bdbdbd"/>
<rect x="641.10" y="305" width="6.7" height="1" fill="#f2f8f2"/>
<rect x="641.10" y="306" width="6.7" height="32.30" fill="#409758"/>
<rect x="649.20" y="217" width="6.7" height="88.00" fill="#bdbdbd"/>
<rect x="649.20" y="305" width="6.7" height="1" fill="#f2f8f2"/>
<rect x="649.20" y="306" width="6.7" height="32.30" fill="#409758"/>
<rect x="657.30" y="217" width="6.7" height="88.00" fill="#bdbdbd"/>
<rect x="657.30" y="305" width="6.7" height="1" fill="#f2f8f2"/>
<rect x="657.30" y="306" width="6.7" height="32.30" fill="#409758"/>
<rect x="665.40" y="217" width="6.7" height="88.00" fill="#bdbdbd"/>
<rect x="665.40" y="305" width="6.7" height="1" fill="#f2f8f2"/>
<rect x="665.40" y="306" width="6.7" height="32.30" fill="#409758"/>
<rect x="673.50" y="217" width="6.7" height="88.00" fill="#bdbdbd"/>
<rect x="673.50" y="305" width="6.7" height="1" fill="#f2f8f2"/>
<rect x="673.50" y="306" width="6.7" height="32.30" fill="#409758"/>
<rect x="681.60" y="217" width="6.7" height="88.00" fill="#bdbdbd"/>
<rect x="681.60" y="305" width="6.7" height="1" fill="#f2f8f2"/>
<rect x="681.60" y="306" width="6.7" height="32.30" fill="#409758"/>
<rect x="689.70" y="216" width="6.7" height="89.00" fill="#bdbdbd"/>
<rect x="689.70" y="305" width="6.7" height="1" fill="#f2f8f2"/>
<rect x="689.70" y="306" width="6.7" height="32.30" fill="#409758"/>
<rect x="697.80" y="216" width="6.7" height="89.00" fill="#bdbdbd"/>
<rect x="697.80" y="305" width="6.7" height="1" fill="#f2f8f2"/>
<rect x="697.80" y="306" width="6.7" height="32.30" fill="#409758"/>
<rect x="705.90" y="216" width="6.7" height="89.00" fill="#bdbdbd"/>
<rect x="705.90" y="305" width="6.7" height="1" fill="#f2f8f2"/>
<rect x="705.90" y="306" width="6.7" height="32.30" fill="#409758"/>
<rect x="714.00" y="216" width="6.7" height="89.00" fill="#bdbdbd"/>
<rect x="714.00" y="305" width="6.7" height="1" fill="#f2f8f2"/>
<rect x="714.00" y="306" width="6.7" height="32.30" fill="#409758"/>
<rect x="722.10" y="216" width="6.7" height="89.70" fill="#bdbdbd"/>
<rect x="722.10" y="305.7" width="6.7" height="1" fill="#f2f8f2"/>
<rect x="722.10" y="306.7" width="6.7" height="31.60" fill="#409758"/>
<rect x="730.20" y="216" width="6.7" height="89.70" fill="#bdbdbd"/>
<rect x="730.20" y="305.7" width="6.7" height="1" fill="#f2f8f2"/>
<rect x="730.20" y="306.7" width="6.7" height="31.60" fill="#409758"/>
<rect x="738.30" y="216" width="6.7" height="89.70" fill="#bdbdbd"/>
<rect x="738.30" y="305.7" width="6.7" height="1" fill="#f2f8f2"/>
<rect x="738.30" y="306.7" width="6.7" height="31.60" fill="#409758"/>
<rect x="746.40" y="217" width="6.7" height="88.70" fill="#bdbdbd"/>
<rect x="746.40" y="305.7" width="6.7" height="1" fill="#f2f8f2"/>
<rect x="746.40" y="306.7" width="6.7" height="31.60" fill="#409758"/>
<rect x="754.50" y="217" width="6.7" height="88.70" fill="#bdbdbd"/>
<rect x="754.50" y="305.7" width="6.7" height="1" fill="#f2f8f2"/>
<rect x="754.50" y="306.7" width="6.7" height="31.60" fill="#409758"/>
<rect x="762.60" y="217" width="6.7" height="88.70" fill="#bdbdbd"/>
<rect x="762.60" y="305.7" width="6.7" height="1" fill="#f2f8f2"/>
<rect x="762.60" y="306.7" width="6.7" height="31.60" fill="#409758"/>
<rect x="770.70" y="217" width="6.7" height="89.20" fill="#bdbdbd"/>
<rect x="770.70" y="306.2" width="6.7" height="1" fill="#f2f8f2"/>
<rect x="770.70" y="307.2" width="6.7" height="31.10" fill="#409758"/>
<rect x="778.80" y="217" width="6.7" height="89.20" fill="#bdbdbd"/>
<rect x="778.80" y="306.2" width="6.7" height="1" fill="#f2f8f2"/>
<rect x="778.80" y="307.2" width="6.7" height="31.10" fill="#409758"/>
<rect x="786.90" y="217" width="6.7" height="89.20" fill="#bdbdbd"/>
<rect x="786.90" y="306.2" width="6.7" height="1" fill="#f2f8f2"/>
<rect x="786.90" y="307.2" width="6.7" height="31.10" fill="#409758"/>
<rect x="795.00" y="217" width="6.7" height="89.20" fill="#bdbdbd"/>
<rect x="795.00" y="306.2" width="6.7" height="1" fill="#f2f8f2"/>
<rect x="795.00" y="307.2" width="6.7" height="31.10" fill="#409758"/>
<line x1="82" y1="340.5" x2="803" y2="340.5" stroke="#b07060" stroke-width="1"/>
<circle cx="86.05" cy="352.6" r="7.9" fill="#a0a0a0"/>
<circle cx="741.9" cy="352.6" r="7.9" fill="#a0a0a0"/>
<path d="M84.2 350.1 L86.7 348.5 L86.7 356.2 M740.05 350.1 L742.55 348.5 L742.55 356.2" stroke="#fff" stroke-width="1.3" fill="none"/>
</svg>

<div class="ylab" style="left:17px;top:199px">7.5M</div>
<div class="ylab" style="left:17px;top:244px">5M</div>
<div class="ylab" style="left:17px;top:290px">2.5M</div>
<div class="ylab" style="left:17px;top:335px">0</div>

<div class="xlab" style="left:58px;top:370px">1/20/20</div>
<div class="xlab" style="left:159px;top:370px">2/1/20</div>
<div class="xlab" style="left:253px;top:370px">2/13/20</div>
<div class="xlab" style="left:350px;top:370px">2/25/20</div>
<div class="xlab" style="left:451px;top:370px">3/8/20</div>
<div class="xlab" style="left:544px;top:370px">3/20/20</div>
<div class="xlab" style="left:645px;top:370px">4/1/20</div>
<div class="xlab" style="left:739px;top:370px">4/13/20</div>

<!-- details -->
<div class="t" style="left:31px;top:439px;font-size:18px;color:#202124">Details</div>
<svg width="20" height="14" style="position:absolute;left:807px;top:437.5px">
<rect x="1.7" y="1.41" width="16.2" height="1.75" fill="#222"/>
<rect x="4.4" y="6.0" width="10.6" height="1.75" fill="#222"/>
<rect x="8" y="10.65" width="3.8" height="1.75" fill="#222"/>
</svg>

<div class="hdr" style="left:31px;top:496px">Status</div>
<div class="hdr" style="left:145px;top:496px">Type</div>
<div class="hdr" style="left:510px;top:496px;color:#202124">Validation</div>
<svg width="12" height="12" style="position:absolute;left:572px;top:496px">
<path d="M5.7 1.6 L5.7 10.3 M1.2 5.7 L5.7 1.3 L10.5 5.8" stroke="#202124" stroke-width="1.4" fill="none"/>
</svg>
<div class="hdr" style="left:655px;top:496px">Trend</div>
<div class="hdr" style="left:791px;top:496px">Pages</div>

<div class="sep" style="top:528.5px"></div>
<div class="sep" style="top:574px"></div>
<div class="sep" style="top:620px"></div>

<div class="cell" style="left:30.6px;top:543.5px;color:#b8463a;font-size:12.2px">Error</div>
<div class="cell med" style="left:145px;top:543.5px;color:#202124;font-size:12.35px">Submitted URL seems to be a Soft 404</div>
<svg width="20" height="20" style="position:absolute;left:510.35px;top:540.60px"><circle cx="10" cy="10" r="8.9" fill="#455a64"/><rect x="9.1" y="5.5" width="2" height="6.2" fill="#fff"/><rect x="9.1" y="12.6" width="2" height="1.9" fill="#fff"/></svg>
<div class="cell med" style="left:539px;top:543.5px;color:#202124">Not Started</div>
<div style="position:absolute;left:654.5px;top:554px;width:59.5px;height:2px;background:#bd3b2c"></div>
<div class="cell" style="right:30px;top:543.5px;color:#202124">5,490</div>
<div class="cell" style="left:30.6px;top:589.0px;color:#b8463a;font-size:12.2px">Error</div>
<div class="cell med" style="left:145px;top:589.0px;color:#202124;font-size:12.35px">Submitted URL has crawl issue</div>
<svg width="20" height="20" style="position:absolute;left:510.35px;top:586.10px"><circle cx="10" cy="10" r="8.9" fill="#455a64"/><rect x="9.1" y="5.5" width="2" height="6.2" fill="#fff"/><rect x="9.1" y="12.6" width="2" height="1.9" fill="#fff"/></svg>
<div class="cell med" style="left:539px;top:589.0px;color:#202124">Not Started</div>
<div style="position:absolute;left:654.5px;top:600px;width:59.5px;height:2px;background:#bd3b2c"></div>
<div class="cell" style="right:30px;top:589.0px;color:#202124">1,408</div>
<div class="cell" style="left:30.6px;top:634.5px;color:#b8463a;font-size:12.2px">Error</div>
<div class="cell med" style="left:145px;top:634.5px;color:#202124;font-size:12.35px">Redirect error</div>
<svg width="20" height="20" style="position:absolute;left:510.35px;top:631.60px"><circle cx="10" cy="10" r="8.9" fill="#455a64"/><rect x="9.1" y="5.5" width="2" height="6.2" fill="#fff"/><rect x="9.1" y="12.6" width="2" height="1.9" fill="#fff"/></svg>
<div class="cell med" style="left:539px;top:634.5px;color:#202124">Not Started</div>
<div style="position:absolute;left:654.5px;top:645px;width:59.5px;height:2px;background:#bd3b2c"></div>
<div class="cell" style="right:30px;top:634.5px;color:#202124">54</div>
</body></html>
